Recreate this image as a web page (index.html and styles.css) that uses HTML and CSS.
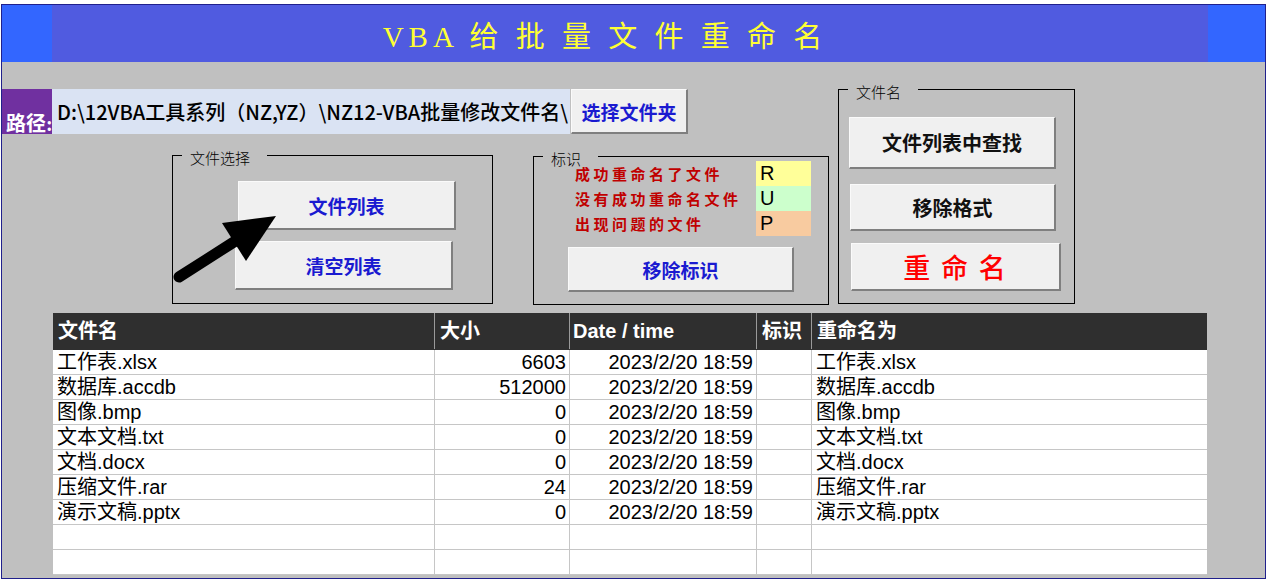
FILE: index.html
```html
<!DOCTYPE html>
<html lang="zh-CN">
  <head>
    <meta charset="UTF-8" />
    <meta name="viewport" content="width=device-width, initial-scale=1.0" />
    <title>VBA 给批量文件重命名</title>
    <link rel="stylesheet" href="styles.css">
  </head>
  <body>
    <div class="sheet">
      <!-- 标题栏 -->
      <div class="title-bar">
        <div class="title-side"></div>
        <div class="title-main">VBA 给 批 量 文 件 重 命 名</div>
        <div class="title-side title-side-right"></div>
      </div>

      <!-- 控件区 -->
      <div class="controls">
        <div class="controls-left">
          <div class="path-row">
            <div class="path-label">路径:</div>
            <div class="path-field">D:\12VBA工具系列（NZ,YZ）\NZ12-VBA批量修改文件名\</div>
            <button class="btn btn-blue btn-folder">选择文件夹</button>
          </div>

          <div class="groups">
            <div class="group group-select">
              <span class="group-title">文件选择</span>
              <button class="btn btn-blue btn-list">文件列表</button>
              <button class="btn btn-blue btn-clear">清空列表</button>
              <svg class="arrow" width="120" height="130" viewBox="0 0 120 130">
                <line x1="6" y1="121" x2="64" y2="84" stroke="#000" stroke-width="11" stroke-linecap="round" />
                <polygon points="103,60 49,67 73,105" fill="#000" />
              </svg>
            </div>

            <div class="group group-mark">
              <span class="group-title">标识</span>
              <div class="legend">
                <div class="legend-text">成功重命名了文件</div>
                <div class="legend-box box-r">R</div>
                <div class="legend-text">没有成功重命名文件</div>
                <div class="legend-box box-u">U</div>
                <div class="legend-text">出现问题的文件</div>
                <div class="legend-box box-p">P</div>
              </div>
              <button class="btn btn-blue btn-unmark">移除标识</button>
            </div>
          </div>
        </div>

        <div class="group group-name">
          <span class="group-title">文件名</span>
          <button class="btn btn-black btn-find">文件列表中查找</button>
          <button class="btn btn-black btn-format">移除格式</button>
          <button class="btn btn-red btn-rename">重 命 名</button>
        </div>
      </div>

      <!-- 文件列表 -->
      <div class="file-table">
        <div class="row row-head">
          <div class="cell">文件名</div>
          <div class="cell">大小</div>
          <div class="cell cell-latin">Date / time</div>
          <div class="cell">标识</div>
          <div class="cell">重命名为</div>
        </div>
        <div class="row">
          <div class="cell">工作表.xlsx</div>
          <div class="cell num">6603</div>
          <div class="cell num">2023/2/20 18:59</div>
          <div class="cell"></div>
          <div class="cell">工作表.xlsx</div>
        </div>
        <div class="row">
          <div class="cell">数据库.accdb</div>
          <div class="cell num">512000</div>
          <div class="cell num">2023/2/20 18:59</div>
          <div class="cell"></div>
          <div class="cell">数据库.accdb</div>
        </div>
        <div class="row">
          <div class="cell">图像.bmp</div>
          <div class="cell num">0</div>
          <div class="cell num">2023/2/20 18:59</div>
          <div class="cell"></div>
          <div class="cell">图像.bmp</div>
        </div>
        <div class="row">
          <div class="cell">文本文档.txt</div>
          <div class="cell num">0</div>
          <div class="cell num">2023/2/20 18:59</div>
          <div class="cell"></div>
          <div class="cell">文本文档.txt</div>
        </div>
        <div class="row">
          <div class="cell">文档.docx</div>
          <div class="cell num">0</div>
          <div class="cell num">2023/2/20 18:59</div>
          <div class="cell"></div>
          <div class="cell">文档.docx</div>
        </div>
        <div class="row">
          <div class="cell">压缩文件.rar</div>
          <div class="cell num">24</div>
          <div class="cell num">2023/2/20 18:59</div>
          <div class="cell"></div>
          <div class="cell">压缩文件.rar</div>
        </div>
        <div class="row">
          <div class="cell">演示文稿.pptx</div>
          <div class="cell num">0</div>
          <div class="cell num">2023/2/20 18:59</div>
          <div class="cell"></div>
          <div class="cell">演示文稿.pptx</div>
        </div>
        <div class="row">
          <div class="cell"></div>
          <div class="cell"></div>
          <div class="cell"></div>
          <div class="cell"></div>
          <div class="cell"></div>
        </div>
        <div class="row">
          <div class="cell"></div>
          <div class="cell"></div>
          <div class="cell"></div>
          <div class="cell"></div>
          <div class="cell"></div>
        </div>
      </div>
    </div>
  </body>
</html>
```

FILE: styles.css
```css
* {
  margin: 0;
  padding: 0;
  box-sizing: border-box;
}

body {
  background: #fff;
  font-family: "Liberation Sans", "Noto Sans CJK SC", sans-serif;
  color: #000;
}

.sheet {
  margin: 4px 0 0 1px;
  width: 1265px;
  height: 575px;
  border: 1px solid #20208c;
  background: #c0c0c0;
  overflow: hidden;
}

/* Title */
.title-bar {
  display: flex;
  height: 57px;
}

.title-side {
  width: 50px;
  background: #3366ff;
}

.title-side-right {
  width: 57px;
}

.title-main {
  flex: 1;
  background: #505be0;
  color: #ffff33;
  font-family: "Liberation Serif", "Noto Sans CJK SC", serif;
  font-size: 29px;
  letter-spacing: 5px;
  display: flex;
  align-items: center;
  justify-content: center;
  padding-right: 50px;
}

/* Controls */
.controls {
  display: flex;
  margin-top: 27px;
  height: 224px;
}

.controls-left {
  width: 836px;
}

.path-row {
  display: flex;
  height: 45px;
}

.path-label {
  width: 50px;
  background: #7030a0;
  color: #fff;
  font-family: "Liberation Serif", "Noto Sans CJK SC", serif;
  font-weight: bold;
  font-size: 20px;
  line-height: 20px;
  white-space: nowrap;
  overflow: hidden;
  display: flex;
  align-items: flex-end;
  padding: 0 0 0 4px;
}

.path-field {
  width: 518px;
  background: #dae3f3;
  font-family: "Noto Sans CJK SC", sans-serif;
  font-weight: 500;
  font-size: 20px;
  line-height: 45px;
  padding-left: 5px;
  white-space: nowrap;
  overflow: hidden;
}

.btn {
  display: flex;
  align-items: center;
  justify-content: center;
  background: #f0f0f0;
  border: 1px solid #fafafa;
  border-right: 2px solid #7f7f7f;
  border-bottom: 2px solid #7f7f7f;
  font-family: "Liberation Serif", "Noto Sans CJK SC", serif;
  font-weight: bold;
  font-size: 19px;
  cursor: pointer;
}

.btn-blue {
  color: #1a1ad0;
}

.btn-black {
  color: #111;
  font-size: 20px;
}

.btn-red {
  color: #ff0000;
  font-size: 27px;
  font-weight: 500;
}

.btn-folder {
  margin-left: 1px;
  width: 117px;
  height: 45px;
}

.groups {
  display: flex;
  gap: 40px;
  margin: 21px 0 0 170px;
}

.group {
  position: relative;
  border: 1px solid #000;
  display: flex;
  flex-direction: column;
  align-items: flex-start;
}

.group-title {
  position: absolute;
  top: -6px;
  left: 9px;
  padding: 0 17px 0 8px;
  background: #c0c0c0;
  font-family: "Noto Sans CJK SC", sans-serif;
  font-size: 15px;
  line-height: 16px;
  font-weight: 300;
}

.group-select {
  width: 321px;
  height: 149px;
  padding: 25px 0 0 62px;
}

.btn-list {
  width: 218px;
  height: 49px;
  margin-left: 3px;
}

.btn-clear {
  width: 218px;
  height: 49px;
  margin-top: 11px;
}

.arrow {
  position: absolute;
  left: 0;
  top: 0;
  z-index: 2;
}

.group-mark {
  width: 296px;
  height: 149px;
  margin-top: 1px;
  padding: 4px 0 0 34px;
}

.legend {
  display: grid;
  grid-template-columns: 181px 55px;
  grid-auto-rows: 25px;
  margin-left: 7px;
}

.legend-text {
  color: #c00000;
  font-family: "Noto Sans CJK SC", serif;
  font-weight: bold;
  font-size: 15px;
  letter-spacing: 3.5px;
  line-height: 25px;
  white-space: nowrap;
}

.legend-box {
  font-size: 20px;
  line-height: 25px;
  padding-left: 4px;
}

.box-r {
  background: #ffff99;
}

.box-u {
  background: #ccffcc;
}

.box-p {
  background: #f8cba0;
}

.btn-unmark {
  width: 226px;
  height: 45px;
  margin-top: 11px;
}

.group-name {
  width: 237px;
  height: 215px;
  padding: 27px 0 0 10px;
}

.btn-find {
  width: 207px;
  height: 52px;
}

.btn-format {
  width: 206px;
  height: 47px;
  margin: 15px 0 0 1px;
}

.btn-rename {
  width: 210px;
  height: 48px;
  margin: 12px 0 0 2px;
  letter-spacing: 2px;
}

/* Table */
.file-table {
  margin-left: 51px;
  width: 1154px;
  background: #fff;
}

.row {
  display: grid;
  grid-template-columns: 381px 135px 187px 55px 396px;
  height: 25px;
  border-bottom: 1px solid #c6c6c6;
}

.cell {
  font-size: 20px;
  line-height: 24px;
  padding: 0 3px 0 4px;
  white-space: nowrap;
  overflow: hidden;
  border-left: 1px solid #c6c6c6;
}

.cell:first-child {
  border-left: none;
}

.num {
  text-align: right;
}

.row-head {
  height: 37px;
  background: #2f2f2f;
  border-bottom: 1px solid #2f2f2f;
}

.row-head .cell {
  color: #fff;
  font-family: "Liberation Serif", "Noto Sans CJK SC", serif;
  font-weight: bold;
  line-height: 36px;
  padding-left: 5px;
  border-left-color: #9a9a9a;
}

.row-head .cell-latin {
  font-family: "Liberation Sans", sans-serif;
  padding-left: 3px;
}
```
